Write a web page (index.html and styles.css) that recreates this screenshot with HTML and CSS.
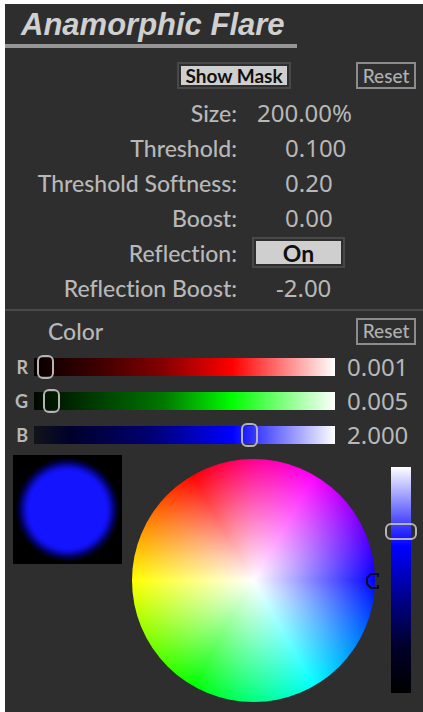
FILE: index.html
```html
<!DOCTYPE html>
<html lang="en">
<head>
<meta charset="utf-8">
<meta name="viewport" content="width=device-width, initial-scale=1">
<title>Anamorphic Flare</title>
<link rel="stylesheet" href="styles.css">
</head>
<body>
<main class="panel">
  <h1 class="title">Anamorphic Flare</h1>

  <section class="settings">
    <div class="toolbar">
      <button type="button" class="toggle mask">Show Mask</button>
      <button type="button" class="reset">Reset</button>
    </div>
    <div class="fields">
      <label for="size">Size:</label>
      <input class="value hundreds" id="size" type="text" value="200.00%">
      <label for="threshold">Threshold:</label>
      <input class="value" id="threshold" type="text" value="0.100">
      <label for="softness">Threshold Softness:</label>
      <input class="value" id="softness" type="text" value="0.20">
      <label for="boost">Boost:</label>
      <input class="value" id="boost" type="text" value="0.00">
      <label for="reflection">Reflection:</label>
      <button type="button" class="toggle switch" id="reflection">On</button>
      <label for="reflection-boost">Reflection Boost:</label>
      <input class="value negative" id="reflection-boost" type="text" value="-2.00">
    </div>
  </section>

  <section class="color">
    <div class="color-head">
      <h2>Color</h2>
      <button type="button" class="reset">Reset</button>
    </div>
    <div class="channels">
      <label for="red">R</label>
      <input class="slider red" id="red" type="range" min="0" max="100" value="1">
      <output for="red">0.001</output>
      <label for="green">G</label>
      <input class="slider green" id="green" type="range" min="0" max="100" value="3">
      <output for="green">0.005</output>
      <label for="blue">B</label>
      <input class="slider blue" id="blue" type="range" min="0" max="100" value="73">
      <output for="blue">2.000</output>
    </div>
    <div class="picker">
      <div class="swatch"></div>
      <div class="wheel">
        <svg class="marker" viewBox="0 0 14 18" width="14" height="18" aria-hidden="true">
          <path d="M13 5V2H6L2 6v6l4 4h7v-3" fill="none" stroke="#0c0c30" stroke-width="2"/>
        </svg>
      </div>
      <input class="level" type="range" min="0" max="100" value="73" aria-label="Brightness">
    </div>
  </section>
</main>
</body>
</html>
```
FILE: styles.css
```css
* {
  box-sizing: border-box;
}

body {
  margin: 0;
  padding: 4px 0 0 5px;
  background: #fff;
  color: #b8b8b8;
  font: 500 23px/32px Lato, "Noto Sans", sans-serif;
  font-variant-ligatures: none;
}

.panel {
  min-height: calc(100vh - 4px);
  background: #2e2e2e;
}

.title {
  width: max-content;
  margin: 0;
  padding: 5px 12px 3px 16px;
  border-bottom: 4px solid #969696;
  color: #d0d0d0;
  font: italic bold 31px/32px "Liberation Sans", sans-serif;
}

button {
  padding: 0;
  font: 500 19px/20px Lato, "Noto Sans", sans-serif;
  white-space: nowrap;
}

.reset {
  width: 60px;
  height: 27px;
  border: 2px solid #8c8c8c;
  background: #2e2e2e;
  color: #b0b0b0;
}

.toggle {
  border: 2px solid #484848;
  background: #cfcfcf;
  box-shadow: inset 0 0 0 2px #2e2e2e;
  color: #101010;
  font-weight: bold;
}

.toolbar {
  display: flex;
  justify-content: space-between;
  padding: 14px 7px 0 172px;
}

.mask {
  width: 114px;
  height: 27px;
}

.fields {
  display: grid;
  grid-template-columns: 232px 1fr;
  grid-auto-rows: 35px;
  column-gap: 15px;
  align-items: center;
  padding: 6px 8px 4px 0;
}

.fields label {
  text-align: right;
}

.value {
  width: 100%;
  height: 32px;
  border: 0;
  padding: 0 0 0 33px;
  background: transparent;
  color: inherit;
  font: 24px/32px "Noto Sans", sans-serif;
}

.hundreds {
  padding-left: 5px;
}

.negative {
  padding-left: 24px;
}

.switch {
  width: 93px;
  height: 31px;
  font-size: 23px;
}

.color {
  border-top: 2px solid #4a4a4a;
}

.color-head {
  display: flex;
  justify-content: space-between;
  align-items: center;
  padding: 4px 7px 3px 43px;
}

h2 {
  margin: 0;
  font: inherit;
}

.channels {
  display: grid;
  grid-template-columns: 16px 1fr 82px;
  grid-auto-rows: 34px;
  column-gap: 6px;
  align-items: center;
  padding-left: 7px;
}

.channels label {
  font-size: 18px;
  font-weight: bold;
  text-align: right;
}

.channels output {
  padding-left: 6px;
  font: 24px/32px "Noto Sans", sans-serif;
}

.slider {
  appearance: none;
  width: 100%;
  height: 24px;
  margin: 0;
  background: transparent;
}

.slider::-webkit-slider-runnable-track {
  height: 18px;
  background: var(--ramp);
}

.slider::-webkit-slider-thumb {
  appearance: none;
  width: 17px;
  height: 24px;
  margin-top: -3px;
  border: 2px solid #b4b4b4;
  border-radius: 6px;
  background: transparent;
}

.red {
  --ramp: linear-gradient(90deg, #080000, #400000 22%, #860000 43%, #f00 66%, #fff);
}

.green {
  --ramp: linear-gradient(90deg, #000800, #004000 22%, #007800 43%, #0f0 66%, #fff);
}

.blue {
  --ramp: linear-gradient(90deg, #111518, #00002c 12%, #000070 38%, #00f 66%, #fff);
}

.picker {
  display: grid;
  grid-template-columns: 109px 1fr 32px;
  column-gap: 10px;
  padding: 3px 6px 8px 8px;
}

.swatch {
  height: 109px;
  background: radial-gradient(circle, #1414ff 38px, #1010e8 41px, #00004c 48px, #000 52px);
}

.wheel {
  position: relative;
  width: 243px;
  height: 243px;
  margin-top: 4px;
  border-radius: 50%;
  background:
    radial-gradient(circle closest-side, #fff, #fff0),
    conic-gradient(#ff0090, #f0f 30deg, #00f 90deg, #0ff 150deg, #0f0 210deg, #ff0 270deg, #f00 330deg, #ff0090);
}

.marker {
  position: absolute;
  top: 113px;
  right: -4px;
}

.level {
  appearance: none;
  writing-mode: vertical-lr;
  direction: rtl;
  width: 32px;
  height: 226px;
  margin: 12px 0 0;
  background: transparent;
}

.level::-webkit-slider-runnable-track {
  width: 20px;
  height: 100%;
  background: linear-gradient(#fff, #4444ff 25%, #00f 35%, #00008c 58%, #000028 80%, #000);
}

.level::-webkit-slider-thumb {
  appearance: none;
  width: 32px;
  height: 17px;
  margin-left: -6px;
  border: 2px solid #b4b4b4;
  border-radius: 6px;
  background: transparent;
}
```
